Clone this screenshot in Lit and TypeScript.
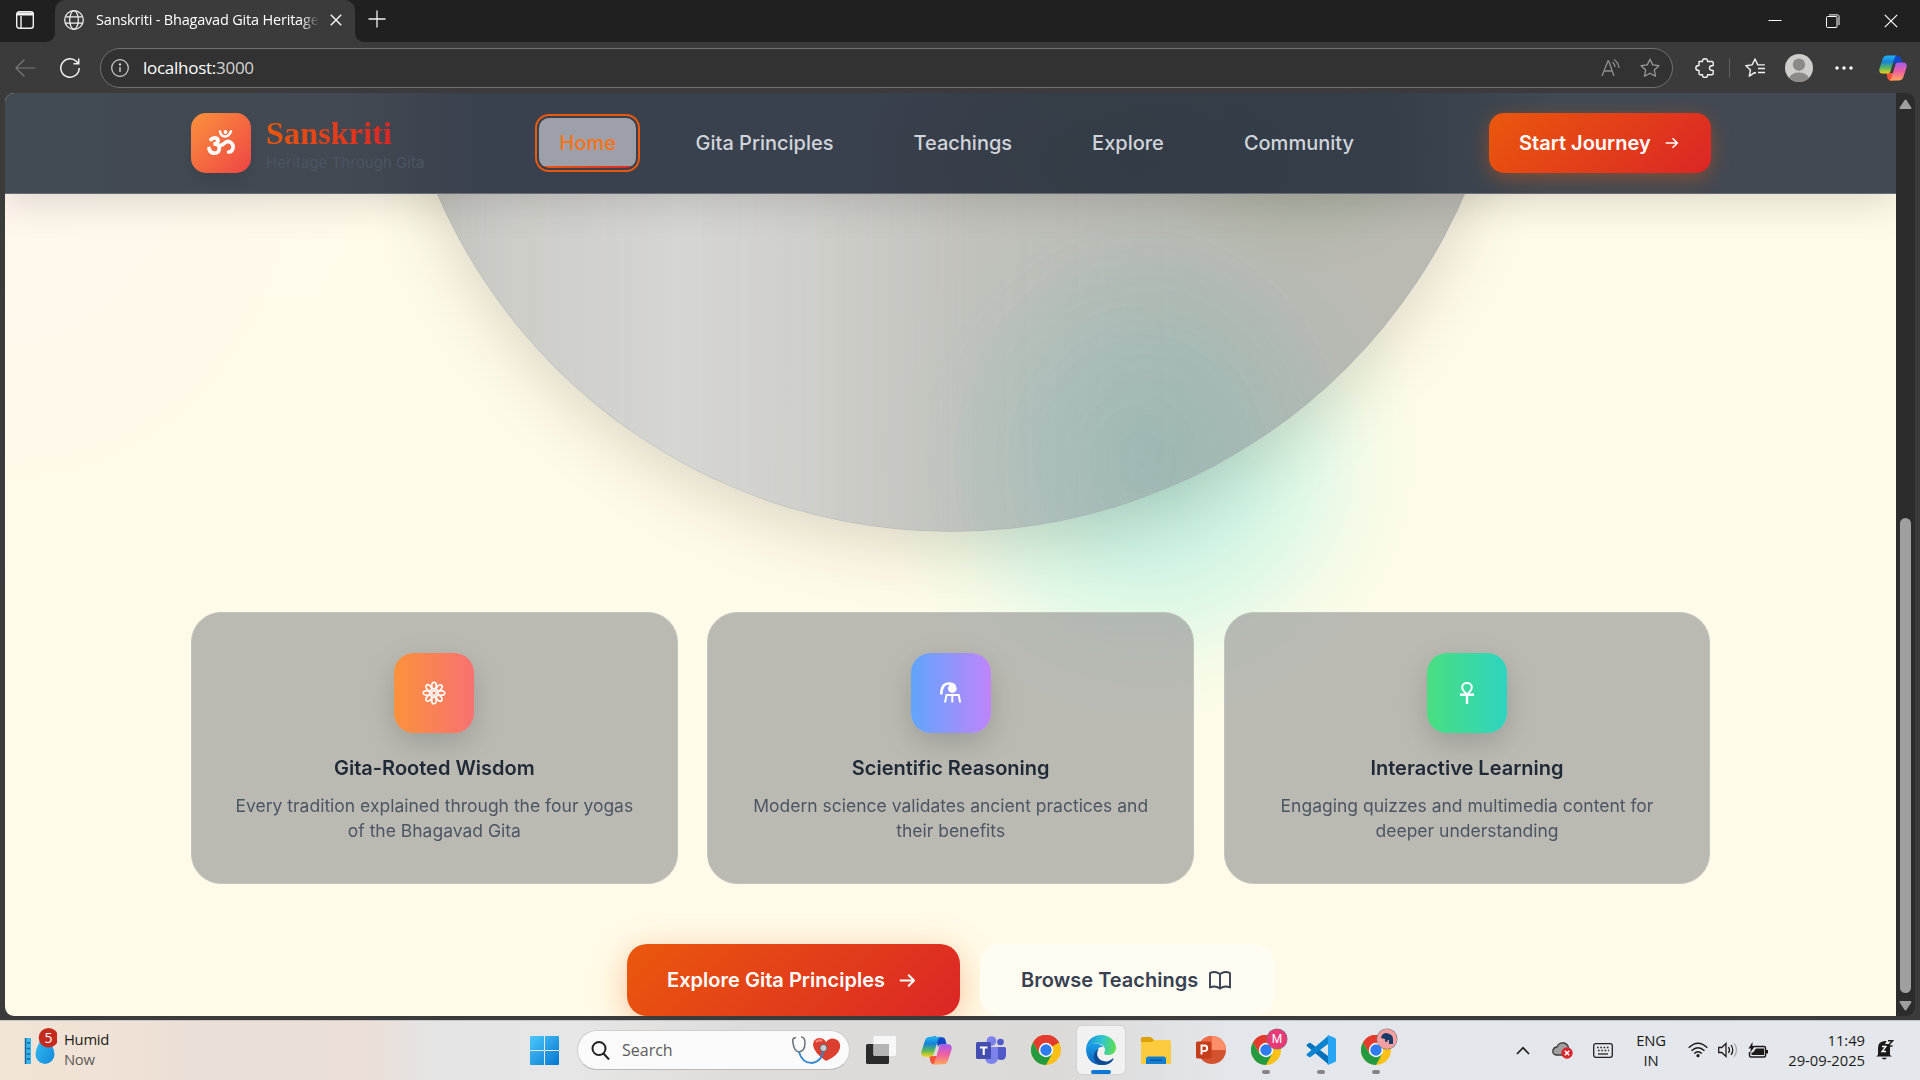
import { LitElement, html, css, svg } from "lit";
import { customElement } from "lit/decorators.js";

const copilot = (size: number) => html`<svg width=${size} height=${size} viewBox="0 0 28 28">
  <defs>
    <linearGradient id="cpa" x1="0" y1="0" x2="0" y2="1"><stop offset="0" stop-color="#22b4f0"/><stop offset=".35" stop-color="#1683d8"/><stop offset=".7" stop-color="#5cb85a"/><stop offset="1" stop-color="#f6d21c"/></linearGradient>
    <linearGradient id="cpb" x1="0" y1="0" x2="0" y2="1"><stop offset="0" stop-color="#a55cf0"/><stop offset=".5" stop-color="#ee5fa2"/><stop offset="1" stop-color="#ffa75c"/></linearGradient>
  </defs>
  <path d="M9 2h10c2 0 2.600 1 3.200 3l1 3.500h-5c-1.500 0-2.300.8-2.800 2.500L13 1z" fill="#1148c8"/>
  <path d="M7.500 19h7l4-6 0 8-3 5.500h-4.200c-1.700 0-2.500-1.500-3-3.200z" fill="#f2553a"/>
  <path d="M8.500 1.500h9.200c-1.400.6-2 1.800-2.500 3.500l-3.700 12c-.7 2-1.600 2.600-3.500 2.600H3.500C.8 19.600-.3 17.500.5 14.500L3.600 5C4.500 2.500 5.800 1.500 8.500 1.500z" fill="url(#cpa)"/>
  <path d="M19.500 26.500h-9.200c1.400-.6 2-1.800 2.500-3.500l3.500-12c.7-2 1.600-2.600 3.500-2.600h4.700c2.700 0 3.800 2.100 3 5.100L24.400 23c-.9 2.500-2.200 3.500-4.900 3.500z" fill="url(#cpb)"/>
</svg>`;

const chrome = html`<svg width="30" height="30" viewBox="0 0 30 30">
  <circle cx="15" cy="15" r="15" fill="#fbc116"/>
  <path d="M15 15L2 7.500A15 15 0 0 1 28 7.500z" fill="#e33b2e"/>
  <path d="M15 8h13.200A15 15 0 0 0 2 7.500l6.500 11z" fill="#e33b2e"/>
  <path d="M2 7.500l6.500 11.200L15 22l6.300-3.500L15 30A15 15 0 0 1 2 7.500z" fill="#249a41"/>
  <circle cx="15" cy="15" r="7.200" fill="#fff"/><circle cx="15" cy="15" r="5.700" fill="#2f7cf0"/>
</svg>`;

const edge = html`<svg width="30" height="30" viewBox="0 0 30 30">
  <defs>
    <linearGradient id="e1" x1="0" y1=".4" x2="1" y2=".5"><stop offset="0" stop-color="#1b8fdb"/><stop offset=".5" stop-color="#2fc3d3"/><stop offset="1" stop-color="#5fe04d"/></linearGradient>
    <linearGradient id="e2" x1="0" y1="0" x2="0" y2="1"><stop offset="0" stop-color="#1aa0e8"/><stop offset="1" stop-color="#0c62bd"/></linearGradient>
  </defs>
  <path d="M0 14C.5 5.500 7 0 15 0c9 0 15 6.500 15 12.800 0 4.700-3.500 7.200-7.500 7.200-3 0-4.500-1-4.500-1.800 0-.6 1-1.300 1-3.400 0-3.300-3-6.300-8-6.300C5 8.500 1 11 0 14z" fill="url(#e1)"/>
  <path d="M0 14c1-3.500 5-5.500 9-5.500 4 0 7 1.500 8.500 3.800-4.500-1-7 2-7 6.200C10.500 24 14 29 20 29c-1.500.7-3 1-5 1C6 30 0 23.500 0 14z" fill="url(#e2)"/>
  <path d="M12.800 13.500c-5 8 2 14 9 12.700 2-.4 3.700-1.500 4.800-2.600.6-.5 1.200.2.800.8C25 28 21.500 30 17 30 9 30 5.500 22 9.500 16.500c.9-1.300 2-2.300 3.300-3z" fill="#0d4b93"/>
</svg>`;

const taskView = html`<svg width="30" height="28" viewBox="0 0 30 28">
  <rect y="8" width="23" height="20" rx="1.500" fill="#2b2b2b"/><rect x="7.500" y="0" width="22.500" height="20" rx="1.500" fill="#fafafa" opacity=".9"/>
  <path d="M7.500 8H23v12H9q-1.500 0-1.500-1.500z" fill="#b4b4b4"/></svg>`;

const teams = html`<svg width="30" height="28" viewBox="0 0 30 28">
  <circle cx="24.500" cy="6" r="3.300" fill="#5059c9"/><path d="M20 11h8.500q1.500 0 1.500 1.500V19q0 5-5 5-3 0-5-2z" fill="#5059c9"/>
  <circle cx="15.500" cy="5" r="4.800" fill="#7b83eb"/><path d="M9 11h13v9.500q0 7.500-6.500 7.500T9 20.500z" fill="#7b83eb"/>
  <rect y="6" width="15" height="17" rx="1.500" fill="#444db0"/><path d="M4 10.500h7.500v2H8.800V19H6.700v-6.500H4z" fill="#fff"/></svg>`;

const folder = html`<svg width="30" height="27" viewBox="0 0 30 27">
  <path d="M0 1.500Q0 0 1.500 0H9q1 0 1.800.8L13 3v4H0z" fill="#dca008"/><path d="M0 5h11l2-2h15.500Q30 3 30 4.500V27H0z" fill="#fccb3e"/>
  <path d="M5 27v-5q0-2.500 2.500-2.500h15q2.500 0 2.500 2.500v5z" fill="#117ed0"/><path d="M9 23.200h12" stroke="#0a4f91" stroke-width="1.200"/></svg>`;

const ppt = html`<svg width="30" height="28" viewBox="0 0 30 28">
  <circle cx="16" cy="14" r="14" fill="#d35230"/><path d="M16 0A14 14 0 0 1 30 14H16z" fill="#ff8f6b"/><path d="M16 0A14 14 0 0 0 2 14h14z" fill="#ed6c47"/>
  <rect y="5.500" width="15.500" height="17" rx="1.500" fill="#c43e1c"/><path d="M5.500 18.500v-9h3q2.700 0 2.700 2.800t-3 2.800H5.500" fill="none" stroke="#fff" stroke-width="1.900"/></svg>`;

const vscode = html`<svg width="30" height="30" viewBox="0 0 30 30">
  <path d="M1 9.500L3 8q.8-.5 1.600 0L22 21v8L.8 11q-.8-.8.200-1.500z" fill="#0071bd"/>
  <path d="M1 20.500L3 22q.8.500 1.600 0L22 9V1L.8 19q-.8.800.2 1.500z" fill="#0a84d0"/>
  <path d="M22 0l7 3q1 .5 1 1.500v21q0 1-1 1.500l-7 3q-1 0 0-1.500v-27Q21 0 22 0z" fill="#27a5f2"/></svg>`;

const globe = html`<svg width="20" height="20" viewBox="0 0 20 20" fill="none" stroke="#f2f2f2" stroke-width="1.250"><circle cx="10" cy="10" r="9.300"/><ellipse cx="10" cy="10" rx="4.300" ry="9.300"/><path d="M1.500 6.800h17M1.500 13.200h17"/></svg>`;

const star = svg`<path d="M10 1.200l2.700 5.700 6.200.8-4.600 4.300 1.200 6.200L10 15.200l-5.500 3 1.200-6.200L1.100 7.700l6.200-.8z"/>`;

@customElement("browser-chrome")
class BrowserChrome extends LitElement {
  static styles = css`
    :host { display: block; font-family: "Open Sans", "Noto Sans", sans-serif; background: #3b3b3b; }
    svg { display: block; flex: none; }
    .tabs { height: 42px; display: flex; background: #3b3b3b; }
    .lead { width: 55px; background: #202020; border-radius: 0 0 9px 0; padding: 11px 0 0 16px; box-sizing: border-box; }
    .tabwrap { background: #202020; }
    .tab { width: 300px; height: 42px; box-sizing: border-box; padding: 0 13px 2px 9px; display: flex; align-items: center; background: #3b3b3b; border-radius: 10px 10px 0 0; }
    .fillers { flex: 1; background: #202020; border-radius: 0 0 0 9px; display: flex; padding: 10px 22px 0 13px; }
    .title { flex: 1; margin: 0 9px 1px 12px; font-size: 14.500px; letter-spacing: -0.190px; color: #fff; white-space: nowrap; overflow: hidden; -webkit-mask-image: linear-gradient(90deg, #000 205px, transparent 223px); mask-image: linear-gradient(90deg, #000 205px, transparent 223px); }
    .sp { flex: 1; }
    .win { display: flex; gap: 44px; padding-top: 4px; }
    .bar { height: 51px; display: flex; align-items: center; box-sizing: border-box; padding: 2px 12px 1px 15px; }
    .bar > .reload { margin-left: 25px; }
    .addr { margin-left: 20px; width: 1573px; height: 40px; box-sizing: border-box; border: 1px solid #707070; border-radius: 20px; background: #323232; display: flex; align-items: center; padding: 0 12px 0 10px; margin-right: 22px; }
    .url { color: #fff; font-size: 17px; margin-left: 14px; letter-spacing: -0.270px; margin-bottom: 1px; }
    .port { color: #d4d4d4; }
    .sep { width: 1px; height: 20px; background: #5f5f5f; margin: 0 15px 0 14px; }
    .read { margin-right: 19px; }
    .av { margin: 0 22px 0 20px; }
    .cp { margin-left: 26px; }
  `;
  render() {
    return html`
      <div class="tabs">
        <div class="lead"><svg width="18" height="18" viewBox="0 0 18 18" fill="none" stroke="#f2f2f2" stroke-width="1.400"><rect x=".7" y=".7" width="16.600" height="16.600" rx="2.500"/><path d="M1 2.800h16M5 5v12" /><path d="M1 1.500h16v3H1z" fill="#f2f2f2" stroke="none"/></svg></div>
        <div class="tabwrap"><div class="tab">${globe}<span class="title">Sanskriti - Bhagavad Gita Heritage</span>
          <svg width="12" height="12" viewBox="0 0 12 12" stroke="#f2f2f2" stroke-width="1.500"><path d="M.8.8l10.400 10.400M11.200.8L.8 11.200"/></svg></div></div>
        <div class="fillers">
          <svg width="18" height="18" viewBox="0 0 18 18" stroke="#f2f2f2" stroke-width="1.300"><path d="M9 .5v17M.5 9h17"/></svg>
          <span class="sp"></span>
          <div class="win">
            <svg width="14" height="14" viewBox="0 0 14 14" stroke="#fff"><path d="M.5 6.500h13"/></svg>
            <svg width="14" height="14" viewBox="0 0 14 14" stroke="#fff" fill="none"><rect x=".5" y="2.500" width="10.500" height="11" rx="1"/><path d="M3 .9h8.500q1.500 0 1.500 1.500V11"/></svg>
            <svg width="14" height="14" viewBox="0 0 14 14" stroke="#fff" stroke-width="1.200"><path d="M.8.8l12.400 12.400M13.200.8L.8 13.200"/></svg>
          </div>
        </div>
      </div>
      <div class="bar">
        <svg width="20" height="18" viewBox="0 0 20 18" fill="none" stroke="#7b7b7b" stroke-width="1.200"><path d="M20 9H1M9.500.5L.9 9l8.600 8.500"/></svg>
        <svg class="reload" width="20" height="20" viewBox="0 0 20 20" fill="none" stroke="#f5f5f5" stroke-width="1.500"><path d="M19.200 10a9.200 9.200 0 1 1-3-6.800L18.500 5.500"/><path d="M18.700.5v5.200h-5.200"/></svg>
        <div class="addr">
          <svg width="18" height="18" viewBox="0 0 18 18" fill="none" stroke="#d0d0d0" stroke-width="1.200"><circle cx="9" cy="9" r="8.300"/><path d="M9 8v5" stroke-width="1.400"/><circle cx="9" cy="5.500" r=".6" fill="#d0d0d0"/></svg>
          <span class="url">localhost:<span class="port">3000</span></span><span class="sp"></span>
          <svg class="read" width="20" height="20" viewBox="0 0 20 20" fill="none" stroke="#8f8f8f" stroke-width="1.300"><path d="M1 18L7 3h.7L13 18M3.200 13h8"/><path d="M11.500 4q2 1.500 2.500 5M13 1.500q4.500 3 5 8.500" /></svg>
          <svg width="20" height="20" viewBox="0 0 20 20" fill="none" stroke="#9a9a9a" stroke-width="1.300" stroke-linejoin="round">${star}</svg>
        </div>
        <svg width="20" height="20" viewBox="0 0 20 20" fill="none" stroke="#f2f2f2" stroke-width="1.400" stroke-linejoin="round"><path d="M4 3.500h3.500q-.3-2.700 2.500-2.700t2.500 2.700H17q1.200 0 1.200 1.200V7.500q-3.700 0-3.700 2.500t3.700 2.500v3q0 1.200-1.200 1.200h-4.500q.3 2.700-2.500 2.700t-2.500-2.700H5.200q-1.200 0-1.200-1.200v-3Q.8 12.500.8 10T4 7.500z"/></svg>
        <span class="sep"></span>
        <svg width="20" height="20" viewBox="0 0 20 20" fill="none" stroke="#f2f2f2" stroke-width="1.400" stroke-linejoin="round"><path d="M11 15l-1.500-.3L4.300 18.200l1.200-6.300L.9 7.700l6.200-.8L10 1l2.800 5.900h7M13 10.500h7M13 14.500h7"/></svg>
        <svg class="av" width="28" height="28" viewBox="0 0 28 28"><circle cx="14" cy="14" r="14" fill="#d0cecb"/><circle cx="14" cy="10.700" r="6.200" fill="#8d8986"/><path d="M4 23.700q3-5.200 10-5.200t10 5.200A14 14 0 0 1 4 23.700z" fill="#8d8986"/></svg>
        <svg width="18" height="4" viewBox="0 0 18 4" fill="#fff"><circle cx="2" cy="2" r="1.700"/><circle cx="9" cy="2" r="1.700"/><circle cx="16" cy="2" r="1.700"/></svg>
        <span class="cp">${copilot(28)}</span>
      </div>`;
  }
}

const arrow = (s: number) => html`<svg width=${s} height=${s} viewBox="0 0 14 14" fill="none" stroke="#fff" stroke-width="1.600" stroke-linecap="round" stroke-linejoin="round"><path d="M1.300 7h11M8 2.700L12.400 7 8 11.300"/></svg>`;

const features = [
  {
    tone: "warm", title: "Gita-Rooted Wisdom",
    lines: ["Every tradition explained through the four yogas", "of the Bhagavad Gita"],
    icon: html`<svg width="24" height="24" viewBox="0 0 24 24" fill="none" stroke="#fff" stroke-width="1.600">
      ${[0, 45, 90, 135, 180, 225, 270, 315].map((a) => svg`<ellipse cx="12" cy="4.600" rx="2.300" ry="3.400" transform="rotate(${a} 12 12)"/>`)}
      <circle cx="12" cy="12" r="4.300" stroke-width="1.200"/><circle cx="12" cy="12" r="2.300" stroke-width="1.500"/></svg>`,
  },
  {
    tone: "cool", title: "Scientific Reasoning",
    lines: ["Modern science validates ancient practices and", "their benefits"],
    icon: html`<svg width="24" height="24" viewBox="0 0 24 24" fill="none" stroke="#fff" stroke-width="2">
      <path d="M2.300 13.500C2.300 6 5.500 2.500 10 2.500q4 0 6 2.500" stroke-width="2.500"/><circle cx="13.300" cy="7.500" r="4.400" fill="#fff" stroke="none"/>
      <path d="M6 21.500l1.500-7.500h12.200l1.500 7.500M13.300 14v7.500"/></svg>`,
  },
  {
    tone: "fresh", title: "Interactive Learning",
    lines: ["Engaging quizzes and multimedia content for", "deeper understanding"],
    icon: html`<svg width="24" height="24" viewBox="0 0 24 24" fill="none" stroke="#fff" stroke-width="2">
      <path d="M12 13.500C8.500 10.500 7.200 8.500 7.200 6.300 7.200 3.800 9.300 2 12 2s4.800 1.800 4.800 4.300c0 2.200-1.300 4.200-4.800 7.200z"/><path d="M5 13.700h14M12 13v10" stroke-width="2.400"/></svg>`,
  },
];

@customElement("gita-page")
class GitaPage extends LitElement {
  static styles = css`
    :host { display: block; font-family: Inter, sans-serif; position: relative; overflow: hidden; border-radius: 9px 0 0 9px; background: radial-gradient(440px 460px at 0 90px, #fff7ed, #fff9ee00), linear-gradient(#fffbea, #fffbe8); }
    svg { display: block; flex: none; }
    .blob { position: absolute; border-radius: 50%; }
    .teal { left: 870px; top: 85px; width: 550px; height: 550px; background: radial-gradient(closest-side, #b6e9da 0%, #cdf2e2 34%, #e0f8e6 57%, #f3fbe8 78%, #fffbe900 100%); }
    .olive { left: 1150px; top: -60px; width: 300px; height: 240px; background: radial-gradient(closest-side, #cfdca6, #e6ecc8 50%, #fffbe900); }
    .disc { position: absolute; left: 386px; top: -681px; width: 1120px; height: 1120px; box-sizing: border-box; border-radius: 50%; border: 1px solid #a8acb155;
      background: radial-gradient(210px 240px at 749px 1050px, #7fc8d028, #7fc8d01c 45%, #7fc8d000), linear-gradient(90deg, #fff0 0, #ffffff46 10%, #ffffff66 26%, #ffffff50 37%, #ffffff1c 52%, #fff0 70%), rgba(154,155,154,.68);
      box-shadow: 0 14px 66px rgba(50,40,10,.18); }
    header { position: relative; z-index: 2; height: 101px; box-sizing: border-box; border-bottom: 1px solid #686c77; display: flex; align-items: center; padding: 0 185px 0 186px;
      background: radial-gradient(300px 160px at 1130px 70px, #333c46, #333c4600), linear-gradient(90deg, #424a52 0, #424952 18%, #3a414e 25%, #3a414e 45%, #383e49 57%, #353f49 73%, #414953 82%, #434952 100%); box-shadow: 0 10px 38px rgba(0,0,0,.13); }
    .logo { width: 60px; height: 60px; border-radius: 15px; background: linear-gradient(135deg, #fb923c, #ef4444); display: grid; place-items: center; box-shadow: 0 10px 15px rgba(0,0,0,.08); }
    .brand { margin-left: 15px; width: 175px; padding-top: 2px; }
    .name { font: 700 32.200px/36px "Liberation Serif", serif; background: linear-gradient(90deg, #ea580c, #dc2626); -webkit-background-clip: text; background-clip: text; color: transparent; width: 126px; white-space: nowrap; letter-spacing: .1px; }
    .tag { font-size: 15px; line-height: 23px; color: #4b5563; letter-spacing: .06px; white-space: nowrap; }
    nav { display: flex; margin-left: 98px; gap: 40px; flex: 1; }
    .link { height: 50px; display: flex; align-items: center; padding: 0 20px; font-size: 20px; font-weight: 500; color: #d1d5db; white-space: nowrap; }
    .active { color: #f97316; padding: 0 20px 0 20.500px; margin-right: -.5px; background: linear-gradient(90deg, #ea580c, #dc2626) bottom / 100% 2px no-repeat, #9da0a9; border-radius: 10px; outline: 2px solid #ea580c; outline-offset: 2px; }
    .cta { border-radius: 15px; background: linear-gradient(135deg, #ea580c, #dc2626); color: #fff; font-weight: 600; font-size: 20px; display: flex; align-items: center; box-sizing: border-box; white-space: nowrap; }
    .start { width: 222px; height: 60px; padding-left: 30px; gap: 14px; box-shadow: 0 5px 20px rgba(234,88,12,.4); }
    main { position: relative; padding: 418px 185px 0 186px; }
    .cards { display: grid; grid-template-columns: repeat(3, 486.660px); gap: 29.700px; }
    .card { height: 272px; box-sizing: border-box; border: 1px solid #c3c4bf; border-radius: 30px; background: rgba(154,155,154,.68); backdrop-filter: blur(10px); display: flex; flex-direction: column; align-items: center; padding-top: 40px; }
    .tile { width: 80px; height: 80px; border-radius: 20px; display: grid; place-items: center; box-shadow: 0 10px 30px rgba(0,0,0,.16); }
    .warm { background: linear-gradient(90deg, #fb923c, #f87171); }
    .cool { background: linear-gradient(90deg, #60a5fa, #c084fc); }
    .fresh { background: linear-gradient(90deg, #4ade80, #2dd4bf); }
    .h { margin-top: 20px; font-size: 20px; line-height: 30px; font-weight: 600; color: #1f2937; }
    .p { margin-top: 10px; font-size: 17.500px; line-height: 25px; color: #4b5563; text-align: center; white-space: nowrap; }
    .actions { display: flex; gap: 20px; padding-left: 436px; margin-top: 60px; }
    .explore { width: 333px; height: 72px; border-radius: 20px; padding-left: 40px; gap: 14px; letter-spacing: .02px; box-shadow: 0 8px 34px rgba(234,88,12,.35); }
    .browse { width: 294px; height: 72px; box-sizing: border-box; border-radius: 20px; border: 1px solid #fffdf4; background: #fffcf1; color: #374151; font-weight: 600; font-size: 20px; display: flex; align-items: center; padding-left: 40px; gap: 11px; white-space: nowrap; }
  `;
  render() {
    return html`
      <div class="blob teal"></div><div class="blob olive"></div><div class="disc"></div>
      <header>
        <div class="logo"><svg width="28" height="26" viewBox="0 0 28 26" fill="none" stroke="#fff" stroke-width="3.700" stroke-linecap="round">
          <path d="M4 9.500q3-2.500 5.500-1.300 2.500 1.500 1 4-1.500 1.800-4 1.800 5-.5 5.800 3.500.3 5.500-5 5.700Q3 23 2 18.500M11.500 15q3.500 1 5.500-1.500 3-3 6-1.500 3.500 2 3 5.500-.5 4.500-4.500 4.500"/>
          <path d="M13 1.500q1 5 5 5t6-5.200" stroke-width="2.400"/><circle cx="18.500" cy="2" r="1.900" fill="#fff" stroke="none"/></svg></div>
        <div class="brand"><div class="name">Sanskriti</div><div class="tag">Heritage Through Gita</div></div>
        <nav><span class="link active">Home</span><span class="link">Gita Principles</span><span class="link">Teachings</span><span class="link">Explore</span><span class="link">Community</span></nav>
        <div class="cta start">Start Journey ${arrow(14)}</div>
      </header>
      <main>
        <div class="cards">${features.map((f) => html`<div class="card"><div class="tile ${f.tone}">${f.icon}</div><div class="h">${f.title}</div><div class="p">${f.lines[0]}<br>${f.lines[1]}</div></div>`)}</div>
        <div class="actions">
          <div class="cta explore">Explore Gita Principles ${arrow(17)}</div>
          <div class="browse">Browse Teachings <svg width="22" height="19" viewBox="0 0 22 19" fill="none" stroke="#374151" stroke-width="1.900" stroke-linejoin="round"><path d="M11 3Q8 1 5.500 1 3 1 1 2v14.500q2-1 4.500-1T11 17.500q3-2 5.500-2t4.500 1V2q-2-1-4.500-1T11 3zM11 3v15.500"/></svg></div>
        </div>
      </main>`;
  }
}

@customElement("task-bar")
class TaskBar extends LitElement {
  static styles = css`
    :host { display: flex; box-sizing: border-box; border-top: 1px solid #c8c6c4; font-family: "Open Sans", "Noto Sans", sans-serif; color: #1b1b1b;
      background: linear-gradient(90deg, #f1e3d6 0, #efe1d5 7%, #e9dfd7 11%, #ebdfd7 19%, #e5e5e6 23%, #e6e6e6 30%, #dedcda 39%, #dcdad8 55%, #e3e6ea 64%, #e4e8ec 100%); }
    svg { display: block; flex: none; }
    .weather { width: 530px; display: flex; padding: 7px 0 0 24px; box-sizing: border-box; }
    .wt { font-size: 14.800px; line-height: 20px; letter-spacing: -0.300px; margin: 1px 0 0 7px; }
    .dim { color: #5d5a58; }
    .start { margin-top: 15px; }
    .search { margin: 9px 0 0 18px; width: 273px; height: 40px; box-sizing: border-box; border: 1px solid #cfcfcf; border-bottom-color: #b9b9b9; border-radius: 20px; background: #fafafa; display: flex; align-items: center; padding: 0 8px 0 13px; font-size: 16px; letter-spacing: 0; color: #5c5c5c; }
    .search span { flex: 1; margin-left: 12px; }
    .apps { display: flex; gap: 7px; margin: 5px 0 0 7px; }
    .app { width: 48px; height: 48px; border-radius: 5px; display: grid; place-items: center; position: relative; }
    .sel { background: #f1f1f1; box-shadow: 0 0 1px 1px #0000000c; }
    .mark { position: absolute; bottom: 0; left: 20px; width: 8px; height: 4px; border-radius: 2px; background: #858585; }
    .sel .mark { left: 14px; width: 20px; background: #0a78d4; }
    .badge { position: absolute; left: 25px; top: 3px; width: 20px; height: 20px; border-radius: 50%; background: #e93a78; color: #fff; font: 12px/20px Roboto, sans-serif; text-align: center; box-shadow: 0 0 0 .5px #777; }
    .pink { background: #f4a0a2; display: grid; place-items: center; }
    .tray { flex: 1; display: flex; align-items: center; justify-content: flex-end; padding: 0 26px 1px 0; height: 58px; font-size: 14.800px; line-height: 20px; letter-spacing: -0.150px; }
    .lang { text-align: center; width: 32px; margin: 0 21px 0 22px; }
    .clock { text-align: right; margin: 0 11px 0 0; width: 97px; white-space: nowrap; letter-spacing: -0.050px; }
    .cloud { margin-left: 22px; }
    .keys { margin-left: 20px; }
    .near { margin-left: 10px; }
  `;
  render() {
    const app = (icon: unknown, mark = false, extra: unknown = "", sel = false) => html`<div class="app ${sel ? "sel" : ""}">${icon}${extra}${mark ? html`<i class="mark"></i>` : ""}</div>`;
    return html`
      <div class="weather">
        <svg width="33" height="38" viewBox="0 0 33 38"><defs><linearGradient id="dr" x1="0" y1="0" x2="1" y2="1"><stop offset="0" stop-color="#36c0f2"/><stop offset="1" stop-color="#1389dc"/></linearGradient></defs>
          <rect x="1" y="10" width="6" height="26" fill="#36b8ee"/><path d="M1.500 10v26M3 15h3M3 20.500h3M3 26h3M3 31h3" stroke="#12609c" stroke-width="1.400"/>
          <path d="M20.500 7q-9 12-9 19a9.500 10 0 0 0 19 0q0-7-10-19z" fill="url(#dr)"/><circle cx="24.500" cy="9.800" r="9.800" fill="#c42b1c"/><text x="24.500" y="15" font-size="14" fill="#fff" text-anchor="middle" font-family="Open Sans">5</text></svg>
        <div class="wt">Humid<br><span class="dim">Now</span></div>
      </div>
      <svg class="start" width="29" height="29" viewBox="0 0 29 29"><defs><linearGradient id="wn" x1="0" y1="0" x2="1" y2="1"><stop offset="0" stop-color="#4cc9fb"/><stop offset="1" stop-color="#0675d0"/></linearGradient></defs><path d="M0 1q0-1 1-1h13v14H0zM15 0h13q1 0 1 1v13H15zM0 15h14v14H1q-1 0-1-1zM15 15h14v13q0 1-1 1H15z" fill="url(#wn)"/></svg>
      <div class="search">
        <svg width="19" height="19" viewBox="0 0 19 19" fill="none" stroke="#222" stroke-width="2"><circle cx="8" cy="7.500" r="6.500"/><path d="M12.500 12.500l5.500 6"/></svg><span>Search</span>
        <svg width="49" height="28" viewBox="0 0 49 28" fill="none"><path d="M34 25Q22 17 21 9q0-6 6-7 5 0 7 4 4-5 9-3 6 2 5 9-2 8-14 13z" fill="#dc3f30"/><path d="M24 6q3-3 6-1" stroke="#ff9080" stroke-width="2"/><path d="M4 2Q0 1 1 7q1 8 6 9 6-1 6-9 0-6-4-6" stroke="#6d7780" stroke-width="1.600"/><path d="M7 16q3 11 13 11 11-2 11-14" stroke="#3585cf" stroke-width="1.800"/><circle cx="31.500" cy="12" r="3.600" fill="#c7ccd2" stroke="#59636d"/></svg>
      </div>
      <div class="apps">
        ${app(taskView)}${app(copilot(31))}${app(teams)}${app(chrome)}${app(edge, true, "", true)}${app(folder)}${app(ppt)}
        ${app(chrome, true, html`<b class="badge">M</b>`)}${app(vscode, true)}
        ${app(chrome, true, html`<b class="badge pink"><svg width="14" height="14" viewBox="0 0 14 14" fill="#173b66"><path d="M2 3q3-3 6-1.500Q13 2.500 13 7v5H9V8H7.500v2L5 9.500V7L1 6z"/></svg></b>`)}
      </div>
      <div class="tray">
        <svg width="14" height="9" viewBox="0 0 14 9" fill="none" stroke="#222" stroke-width="1.800"><path d="M1 8l6-6.300L13 8"/></svg>
        <svg class="cloud" width="21" height="18" viewBox="0 0 21 18"><path d="M4 14Q0 13 1 9q1-3 4-3 2-5 7-4 4 1 4.500 5l-2 7z" fill="#a0a0a0" stroke="#3b3b3b" stroke-width="1.300"/><circle cx="15" cy="12" r="5.700" fill="#d8262e"/><path d="M12.800 9.800l4.400 4.400M17.200 9.800l-4.400 4.400" stroke="#fff" stroke-width="1.600"/></svg>
        <svg class="keys" width="20" height="15" viewBox="0 0 20 15" fill="none" stroke="#222" stroke-width="1.300"><rect x=".7" y=".7" width="18.600" height="13.600" rx="2"/><path d="M4 4.500h12.500M5 7.500h11" stroke-dasharray="1.600 1.700" stroke-width="1.600"/><path d="M5 11h10"/></svg>
        <div class="lang">ENG<br>IN</div>
        <svg width="20" height="16" viewBox="0 0 20 16" fill="none" stroke="#1b1b1b" stroke-width="1.400"><path d="M.7 5.800q9.300-9 18.600 0M3.500 8.800q6.500-6 13 0M6.200 11.500q3.800-3.600 7.600 0"/><circle cx="10" cy="13.700" r="1.600" fill="#1b1b1b" stroke="none"/></svg>
        <svg class="near" width="20" height="16" viewBox="0 0 20 16" fill="none" stroke="#1b1b1b" stroke-width="1.300"><path d="M.7 5.500h3L8 1.500v13l-4.300-4h-3z"/><path d="M10.500 5q2 3 0 6M13 3q3.500 5 0 10"/><path d="M16 1.300q5 6.700 0 13.400" stroke="#aaa"/></svg>
        <svg class="near" width="20" height="17" viewBox="0 0 20 17"><path d="M6 4.500h10q1.500 0 1.500 1.500v7.500q0 1.500-1.500 1.500H3q-1.500 0-1.500-1.500V10" fill="none" stroke="#1b1b1b" stroke-width="1.500"/><path d="M18 8h2v3.500h-2zM8 6.500h8V13H3.500v-2.500H5z" fill="#1b1b1b"/><path d="M4.500 0L.5 6.500H3L2 11l5-7H4.500z" fill="#1b1b1b"/></svg>
        <div class="clock">11:49<br>29-09-2025</div>
        <svg width="18" height="20" viewBox="0 0 18 20"><path d="M2 15V8q0-6.500 6.500-7h2L9 4h5v11l2 1.500H0zM5.500 17.800h5.500Q8.300 21 5.500 17.800z" fill="#1b1b1b"/><path d="M6 6.500h4L6 11.500h4" fill="none" stroke="#fff" stroke-width="1.300"/><path d="M12 .8h4.500L12 6h4.500" fill="none" stroke="#1b1b1b" stroke-width="1.400"/></svg>
      </div>`;
  }
}

@customElement("app-root")
class AppRoot extends LitElement {
  static styles = css`
    :host { display: grid; grid-template-rows: 93px 927px 60px; width: 1920px; height: 1080px; overflow: hidden; background: #3b3b3b; }
    .view { display: flex; padding: 0 5px 4px; }
    gita-page { flex: 1; }
    .scroll { width: 19px; box-sizing: border-box; background: #2c2c2c; border-radius: 0 9px 9px 0; display: flex; flex-direction: column; align-items: center; padding: 6px 0 5px; }
    .thumb { width: 11px; height: 475px; border-radius: 6px; background: #9f9f9f; margin: 409px 0 auto; flex: none; }
    svg { display: block; flex: none; }
  `;
  render() {
    return html`<browser-chrome></browser-chrome>
      <div class="view"><gita-page></gita-page>
        <div class="scroll"><svg width="13" height="10" viewBox="0 0 13 10"><path d="M1.500 9L6.500 1.500 11.500 9z" fill="#9f9f9f" stroke="#9f9f9f" stroke-width="2" stroke-linejoin="round"/></svg><div class="thumb"></div>
        <svg width="13" height="10" viewBox="0 0 13 10"><path d="M1.500 1L6.500 8.500 11.500 1z" fill="#9f9f9f" stroke="#9f9f9f" stroke-width="2" stroke-linejoin="round"/></svg></div>
      </div><task-bar></task-bar>`;
  }
}
